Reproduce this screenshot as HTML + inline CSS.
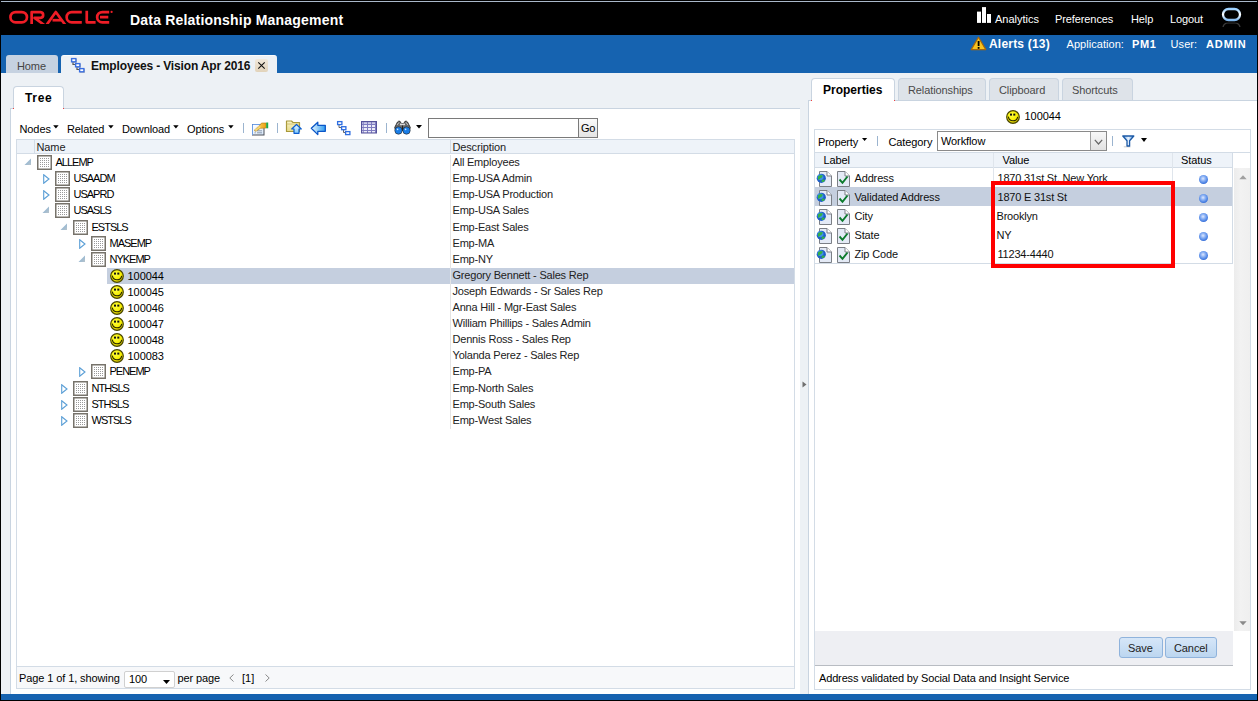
<!DOCTYPE html>
<html><head><meta charset="utf-8"><title>Data Relationship Management</title>
<style>
html,body{margin:0;padding:0;}
body{width:1258px;height:701px;position:relative;overflow:hidden;background:#000;font-family:"Liberation Sans", sans-serif;}
div,span,svg{position:absolute;box-sizing:border-box;}
.t{white-space:nowrap;}
</style></head><body>

<div style="left:1px;top:1px;width:1256px;height:1px;background:#a9b8c9"></div>
<div style="left:1px;top:35px;width:1256px;height:38px;background:#1663b0"></div>
<div style="left:1px;top:73px;width:1256px;height:621px;background:#edf1f5"></div>
<div style="left:1px;top:694px;width:1256px;height:6px;background:#1663b0"></div>
<svg style="left:0;top:0" width="120" height="35" viewBox="0 0 120 35">
<defs><clipPath id="lc"><rect x="0" y="9" width="120" height="14.9"/></clipPath></defs>
<g fill="none" stroke="#ef1d26" stroke-width="2.7" clip-path="url(#lc)" stroke-linejoin="round">
<rect x="10.45" y="12.05" width="16.5" height="10.3" rx="5.15" ry="5.15"/>
<path d="M31.65 25 V12.05 H40.6 A2.95 2.95 0 0 1 40.6 17.9 H34.5 L44.3 25"/>
<path d="M46.5 25 L55.8 12 L65.3 25"/>
<path d="M52.5 20.2 H61.5"/>
<path d="M81.8 12.05 H71.8 A5.15 5.15 0 0 0 71.8 22.35 H81.8"/>
<path d="M86.75 10.7 V22.35 H95.6"/>
<path d="M109.2 12.05 H102.3 A5.15 5.15 0 0 0 102.3 22.35 H109.2 M100 17.2 H108.3"/>
</g>
<circle cx="111.6" cy="11.9" r="1.1" fill="#ef1d26"/>
</svg>
<span class="t" style="left:130px;top:12.95px;font-size:14px;line-height:14px;font-weight:bold;color:#fff;letter-spacing:0.2px;">Data Relationship Management</span>
<svg style="left:976px;top:6px" width="16" height="17" viewBox="0 0 16 17">
<rect x="1" y="5.6" width="4" height="11.3" fill="#fff"/><rect x="6" y="1.1" width="4" height="15.8" fill="#fff"/><rect x="11" y="8" width="4" height="8.9" fill="#fff"/>
</svg>
<span class="t" style="left:995px;top:14.19px;font-size:11px;line-height:11px;font-weight:normal;color:#fff;letter-spacing:0px;">Analytics</span>
<span class="t" style="left:1055px;top:14.19px;font-size:11px;line-height:11px;font-weight:normal;color:#fff;letter-spacing:-0.1px;">Preferences</span>
<span class="t" style="left:1131px;top:14.19px;font-size:11px;line-height:11px;font-weight:normal;color:#fff;letter-spacing:-0.1px;">Help</span>
<span class="t" style="left:1170px;top:14.19px;font-size:11px;line-height:11px;font-weight:normal;color:#fff;letter-spacing:-0.1px;">Logout</span>
<svg style="left:1220px;top:6px" width="24" height="22" viewBox="0 0 24 22">
<rect x="3" y="3" width="17" height="11" rx="5.5" ry="5.5" fill="none" stroke="url(#og)" stroke-width="2.3"/>
<defs><clipPath id="oc"><rect x="0" y="16.5" width="24" height="4.5"/></clipPath><linearGradient id="og" x1="0" y1="0" x2="0" y2="1"><stop offset="0" stop-color="#9ad0ff"/><stop offset="0.5" stop-color="#ffffff"/><stop offset="1" stop-color="#7fb8ef"/></linearGradient></defs>
<rect x="3" y="16.8" width="17" height="10" rx="5" ry="5" fill="none" stroke="#3a3a3a" stroke-width="1.3" clip-path="url(#oc)"/>
</svg>
<svg style="left:970px;top:36px" width="17" height="15" viewBox="0 0 17 15">
<path d="M8.5 1.2 L15.8 13.6 H1.2 Z" fill="#f9c31f" stroke="#a8670a" stroke-width="1.2" stroke-linejoin="round"/>
<rect x="7.7" y="5" width="1.8" height="5" fill="#000"/><rect x="7.7" y="11" width="1.8" height="1.8" fill="#000"/>
</svg>
<span class="t" style="left:989px;top:38.44px;font-size:12px;line-height:12px;font-weight:bold;color:#fff;letter-spacing:0.2px;">Alerts (13)</span>
<span class="t" style="left:1066.5px;top:39.19px;font-size:11px;line-height:11px;font-weight:normal;color:#fff;letter-spacing:0.05px;">Application:</span>
<span class="t" style="left:1132px;top:39.19px;font-size:11px;line-height:11px;font-weight:bold;color:#fff;letter-spacing:0.6px;">PM1</span>
<span class="t" style="left:1170.5px;top:39.19px;font-size:11px;line-height:11px;font-weight:normal;color:#fff;letter-spacing:0.1px;">User:</span>
<span class="t" style="left:1206px;top:39.19px;font-size:11px;line-height:11px;font-weight:bold;color:#fff;letter-spacing:0.9px;">ADMIN</span>
<div style="left:6px;top:55px;width:52px;height:18px;background:#c6d2e1;border-radius:3px 3px 0 0"></div>
<span class="t" style="left:17px;top:60.69px;font-size:11px;line-height:11px;font-weight:normal;color:#444;letter-spacing:-0.1px;">Home</span>
<div style="left:61px;top:55px;width:216px;height:18px;background:#edf1f5;border-top:1px solid #fbfcfd;border-radius:3px 3px 0 0"></div>
<svg style="left:70px;top:57px" width="16" height="16" viewBox="0 0 16 16">
<path d="M3 5 V7.5 H5 M7 10 V12.5 H9" stroke="#555" stroke-width="1.2" fill="none"/>
<path d="M6.5 2 V5.5 M10.5 7 V10.5 M14.5 12 V15.5 M2 5.5 H6.5 M6 10.5 H10.5 M10 15.5 H14.5" stroke="#999" stroke-width="0.8" opacity="0.7"/>
<rect x="1.6" y="1.6" width="4.3" height="3.2" fill="#fff" stroke="#3a6fe0" stroke-width="1.4"/>
<rect x="5.6" y="6.6" width="4.3" height="3.2" fill="#fff" stroke="#3a6fe0" stroke-width="1.4"/>
<rect x="9.6" y="11.6" width="4.3" height="3.2" fill="#fff" stroke="#3a6fe0" stroke-width="1.4"/>
</svg>
<span class="t" style="left:91px;top:59.84px;font-size:12px;line-height:12px;font-weight:bold;color:#111;letter-spacing:-0.15px;">Employees - Vision Apr 2016</span>
<div style="left:255px;top:59px;width:13px;height:13px;background:linear-gradient(#f1e9dc,#e2d3ba);border-radius:2px"></div>
<svg style="left:256px;top:60px" width="11" height="11" viewBox="0 0 11 11"><path d="M2.3 2.3 L8.7 8.7 M8.7 2.3 L2.3 8.7" stroke="#111" stroke-width="1.05"/></svg>
<div style="left:13px;top:86px;width:51px;height:23px;background:#fff;border:1px solid #c9d4e0;border-bottom:none;border-radius:4px 4px 0 0"></div>
<span class="t" style="left:25px;top:91.84px;font-size:12px;line-height:12px;font-weight:bold;color:#000;letter-spacing:0.7px;">Tree</span>
<div style="left:10px;top:108px;width:790px;height:586px;background:#fff;border-left:1px solid #c9d4e0;border-top:1px solid #c9d4e0"></div>
<div style="left:14px;top:108px;width:49px;height:1px;background:#fff"></div>
<div style="left:13px;top:108px;width:1px;height:1px;background:#f04040"></div>
<div style="left:63px;top:108px;width:1px;height:1px;background:#f04040"></div>
<span class="t" style="left:19.5px;top:123.69px;font-size:11px;line-height:11px;font-weight:normal;color:#000;letter-spacing:-0.1px;">Nodes</span>
<svg style="left:53px;top:124.5px" width="6" height="4" viewBox="0 0 6 4"><path d="M0.2 0.2 H5.6 L2.9 3.4 Z" fill="#000"/></svg>
<span class="t" style="left:67px;top:123.69px;font-size:11px;line-height:11px;font-weight:normal;color:#000;letter-spacing:-0.1px;">Related</span>
<svg style="left:108px;top:124.5px" width="6" height="4" viewBox="0 0 6 4"><path d="M0.2 0.2 H5.6 L2.9 3.4 Z" fill="#000"/></svg>
<span class="t" style="left:122px;top:123.69px;font-size:11px;line-height:11px;font-weight:normal;color:#000;letter-spacing:-0.1px;">Download</span>
<svg style="left:173px;top:124.5px" width="6" height="4" viewBox="0 0 6 4"><path d="M0.2 0.2 H5.6 L2.9 3.4 Z" fill="#000"/></svg>
<span class="t" style="left:187px;top:123.69px;font-size:11px;line-height:11px;font-weight:normal;color:#000;letter-spacing:-0.1px;">Options</span>
<svg style="left:228px;top:124.5px" width="6" height="4" viewBox="0 0 6 4"><path d="M0.2 0.2 H5.6 L2.9 3.4 Z" fill="#000"/></svg>
<div style="left:243px;top:123px;width:1px;height:10px;background:#9bb4cf"></div>
<div style="left:277px;top:123px;width:1px;height:10px;background:#9bb4cf"></div>
<div style="left:386px;top:123px;width:1px;height:10px;background:#9bb4cf"></div>
<svg style="left:251px;top:120px" width="19" height="16" viewBox="0 0 19 16">
<defs><linearGradient id="sh" x1="0" y1="0" x2="1" y2="1"><stop offset="0" stop-color="#ffffff"/><stop offset="1" stop-color="#d6e6f8"/></linearGradient>
<linearGradient id="pn" x1="0" y1="0" x2="1" y2="0"><stop offset="0" stop-color="#f6e27a"/><stop offset="1" stop-color="#f0a010"/></linearGradient></defs>
<rect x="1.5" y="4.5" width="11.5" height="10.5" fill="url(#sh)" stroke="#4a4f58" stroke-width="1"/>
<path d="M1.5 15 V4.5 H13" fill="none" stroke="#6d9ee6" stroke-width="1"/>
<path d="M3.5 10.8 H4.8 M6 10.8 H11 M3.5 12.8 H4.8 M6 12.8 H11" stroke="#8a9bb0" stroke-width="1"/>
<path d="M3.3 10.2 L9 5 L10.5 3 H15.2 V8 L9.5 8.3 L4.8 11.3 Z" fill="url(#pn)" stroke="#b07810" stroke-width="0.6"/>
<path d="M4 9.5 L9 5.5 M5 10.5 L10 6.5" stroke="#fff6c0" stroke-width="0.7" stroke-dasharray="1 1"/>
<rect x="15.2" y="2.5" width="2" height="5.8" fill="#1fa84a"/>
</svg>
<svg style="left:285px;top:119px" width="18" height="16" viewBox="0 0 18 16">
<defs><linearGradient id="fd" x1="0" y1="0" x2="0" y2="1"><stop offset="0" stop-color="#faf5c8"/><stop offset="1" stop-color="#e6da88"/></linearGradient>
<linearGradient id="ua" x1="0" y1="0" x2="0" y2="1"><stop offset="0" stop-color="#e8f6ff"/><stop offset="1" stop-color="#7cc8fa"/></linearGradient></defs>
<path d="M1.5 2 H6.5 L8 3.5 H14.5 V12.5 H1.5 Z" fill="url(#fd)" stroke="#a8983a" stroke-width="1.2" stroke-linejoin="round"/>
<path d="M1.5 5 H14.5" stroke="#c8b860" stroke-width="0.8"/>
<path d="M11.5 5.5 L16.3 10 H14 V14.3 H9 V10 H6.7 Z" fill="url(#ua)" stroke="#0c5ed0" stroke-width="1.2" stroke-linejoin="round"/>
</svg>
<svg style="left:310px;top:121px" width="18" height="15" viewBox="0 0 18 15">
<defs><linearGradient id="ba" x1="0" y1="0" x2="1" y2="0"><stop offset="0" stop-color="#eaf7ff"/><stop offset="1" stop-color="#2f9cf0"/></linearGradient></defs>
<path d="M1.3 7.3 L7.8 1.2 V4.3 H15.3 V10.3 H7.8 V13.6 Z" fill="url(#ba)" stroke="#0a56c8" stroke-width="1.3" stroke-linejoin="round"/>
</svg>
<svg style="left:336px;top:120px" width="16" height="16" viewBox="0 0 16 16">
<path d="M3 4.5 V7.5 H5.5 M7.5 9.5 V12.5 H9.5" stroke="#666" stroke-width="1" fill="none"/>
<rect x="1.6" y="1.6" width="4.3" height="3" fill="#fff" stroke="#2f6ee0" stroke-width="1.3"/>
<rect x="5.6" y="6.7" width="4.3" height="3" fill="#fff" stroke="#2f6ee0" stroke-width="1.3"/>
<rect x="9.6" y="11.6" width="4.3" height="3" fill="#fff" stroke="#2f6ee0" stroke-width="1.3"/>
</svg>
<svg style="left:360px;top:120px" width="18" height="15" viewBox="0 0 18 15">
<rect x="1.5" y="1.5" width="15" height="11.5" fill="#7f7cc0" stroke="#55529a" stroke-width="1"/>
<g fill="#ececf8"><rect x="4" y="2.5" width="3" height="1.2"/><rect x="8" y="2.5" width="3" height="1.2"/><rect x="12" y="2.5" width="3" height="1.2"/>
<rect x="4" y="5" width="3" height="2"/><rect x="8" y="5" width="3" height="2"/><rect x="12" y="5" width="3" height="2"/>
<rect x="4" y="8" width="3" height="2"/><rect x="8" y="8" width="3" height="2"/><rect x="12" y="8" width="3" height="2"/>
<rect x="4" y="11" width="3" height="1.3"/><rect x="8" y="11" width="3" height="1.3"/><rect x="12" y="11" width="3" height="1.3"/>
<rect x="2.3" y="2.5" width="1" height="1.2"/><rect x="2.3" y="5" width="1" height="2"/><rect x="2.3" y="8" width="1" height="2"/><rect x="2.3" y="11" width="1" height="1.3"/></g>
</svg>
<svg style="left:394px;top:120px" width="18" height="15" viewBox="0 0 18 15">
<path d="M3.5 2 Q4.5 0.8 6 1.3 L7.3 3.5 H9.7 L11 1.3 Q12.5 0.8 13.5 2 L16.3 7.5 L15.5 10 H1.5 L0.7 7.5 Z" fill="#6a6a6a" stroke="#2a2a2a" stroke-width="0.9"/>
<path d="M3 5 L5 2.5 M12 2.5 L14 5" stroke="#cfcfcf" stroke-width="0.9"/>
<rect x="6" y="3.6" width="5" height="1.6" fill="#dadada"/>
<path d="M8.5 5.5 V11" stroke="#222" stroke-width="1"/>
<circle cx="4.5" cy="10.5" r="3.7" fill="#1a7ee8" stroke="#222" stroke-width="0.6"/>
<circle cx="12.5" cy="10.5" r="3.7" fill="#1a7ee8" stroke="#222" stroke-width="0.6"/>
<circle cx="3.6" cy="9.4" r="0.8" fill="#cfe8ff"/><circle cx="11.6" cy="9.4" r="0.8" fill="#cfe8ff"/>
</svg>
<svg style="left:416px;top:125px" width="6" height="4" viewBox="0 0 6 4"><path d="M0 0 H6 L3 3.5 Z" fill="#000"/></svg>
<div style="left:428px;top:118px;width:151px;height:20px;background:#fff;border:1px solid #7a7a7a"></div>
<div style="left:578px;top:118px;width:20px;height:20px;background:linear-gradient(#fafafa,#e4e4e4);border:1px solid #7a7a7a"></div>
<span class="t" style="left:581px;top:122.69px;font-size:11px;line-height:11px;font-weight:normal;color:#000;letter-spacing:-0.2px;">Go</span>
<div style="left:16px;top:139px;width:779px;height:528px;background:#fff;border:1px solid #d3dce6"></div>
<div style="left:17px;top:140px;width:777px;height:14px;background:#eef3f9;border-bottom:1px solid #d3dce6"></div>
<div style="left:34px;top:140px;width:1px;height:14px;background:#d3dce6"></div>
<div style="left:450px;top:140px;width:1px;height:14px;background:#d3dce6"></div>
<span class="t" style="left:36.5px;top:141.69px;font-size:11px;line-height:11px;font-weight:normal;color:#222;letter-spacing:-0.1px;">Name</span>
<span class="t" style="left:452.5px;top:141.69px;font-size:11px;line-height:11px;font-weight:normal;color:#222;letter-spacing:-0.15px;">Description</span>
<div style="left:107px;top:268px;width:687px;height:16px;background:#c5cfdf"></div>
<div style="left:450px;top:155px;width:1px;height:274px;background:#e4e4e4"></div>
<svg style="left:24px;top:158px" width="8" height="8" viewBox="0 0 8 8"><defs><linearGradient id="tg155" x1="0" y1="0" x2="1" y2="1"><stop offset="0" stop-color="#7fb0d8"/><stop offset="1" stop-color="#b8c4cc"/></linearGradient></defs><path d="M7 0.5 V7 H0.5 Z" fill="url(#tg155)"/></svg>
<svg style="left:37px;top:155px" width="15" height="15" viewBox="0 0 15 15">
<rect x="0.75" y="0.75" width="13.5" height="13.5" fill="#fff" stroke="#77736b" stroke-width="1.5"/>
<path d="M3 3.5 H12 M3 5.5 H12 M3 7.5 H12 M3 9.5 H12 M3 11.5 H12" stroke="#9a9a9a" stroke-width="1" stroke-dasharray="1 1"/>
</svg>
<span class="t" style="left:55.5px;top:157.19px;font-size:11px;line-height:11px;font-weight:normal;color:#000;letter-spacing:-1.0px;">ALLEMP</span>
<span class="t" style="left:452.5px;top:157.19px;font-size:11px;line-height:11px;font-weight:normal;color:#222;letter-spacing:-0.2px;">All Employees</span>
<svg style="left:43px;top:174px" width="7" height="10" viewBox="0 0 7 10"><path d="M0.7 0.7 L6 5 L0.7 9.3 Z" fill="#fff" stroke="#5b9fd6" stroke-width="1.1"/></svg>
<svg style="left:55px;top:171px" width="15" height="15" viewBox="0 0 15 15">
<rect x="0.75" y="0.75" width="13.5" height="13.5" fill="#fff" stroke="#77736b" stroke-width="1.5"/>
<path d="M3 3.5 H12 M3 5.5 H12 M3 7.5 H12 M3 9.5 H12 M3 11.5 H12" stroke="#9a9a9a" stroke-width="1" stroke-dasharray="1 1"/>
</svg>
<span class="t" style="left:73.5px;top:173.19px;font-size:11px;line-height:11px;font-weight:normal;color:#000;letter-spacing:-1.0px;">USAADM</span>
<span class="t" style="left:452.5px;top:173.19px;font-size:11px;line-height:11px;font-weight:normal;color:#222;letter-spacing:-0.2px;">Emp-USA Admin</span>
<svg style="left:43px;top:190px" width="7" height="10" viewBox="0 0 7 10"><path d="M0.7 0.7 L6 5 L0.7 9.3 Z" fill="#fff" stroke="#5b9fd6" stroke-width="1.1"/></svg>
<svg style="left:55px;top:187px" width="15" height="15" viewBox="0 0 15 15">
<rect x="0.75" y="0.75" width="13.5" height="13.5" fill="#fff" stroke="#77736b" stroke-width="1.5"/>
<path d="M3 3.5 H12 M3 5.5 H12 M3 7.5 H12 M3 9.5 H12 M3 11.5 H12" stroke="#9a9a9a" stroke-width="1" stroke-dasharray="1 1"/>
</svg>
<span class="t" style="left:73.5px;top:189.19px;font-size:11px;line-height:11px;font-weight:normal;color:#000;letter-spacing:-1.0px;">USAPRD</span>
<span class="t" style="left:452.5px;top:189.19px;font-size:11px;line-height:11px;font-weight:normal;color:#222;letter-spacing:-0.2px;">Emp-USA Production</span>
<svg style="left:42px;top:206px" width="8" height="8" viewBox="0 0 8 8"><defs><linearGradient id="tg203" x1="0" y1="0" x2="1" y2="1"><stop offset="0" stop-color="#7fb0d8"/><stop offset="1" stop-color="#b8c4cc"/></linearGradient></defs><path d="M7 0.5 V7 H0.5 Z" fill="url(#tg203)"/></svg>
<svg style="left:55px;top:203px" width="15" height="15" viewBox="0 0 15 15">
<rect x="0.75" y="0.75" width="13.5" height="13.5" fill="#fff" stroke="#77736b" stroke-width="1.5"/>
<path d="M3 3.5 H12 M3 5.5 H12 M3 7.5 H12 M3 9.5 H12 M3 11.5 H12" stroke="#9a9a9a" stroke-width="1" stroke-dasharray="1 1"/>
</svg>
<span class="t" style="left:73.5px;top:205.19px;font-size:11px;line-height:11px;font-weight:normal;color:#000;letter-spacing:-1.0px;">USASLS</span>
<span class="t" style="left:452.5px;top:205.19px;font-size:11px;line-height:11px;font-weight:normal;color:#222;letter-spacing:-0.2px;">Emp-USA Sales</span>
<svg style="left:60px;top:223px" width="8" height="8" viewBox="0 0 8 8"><defs><linearGradient id="tg220" x1="0" y1="0" x2="1" y2="1"><stop offset="0" stop-color="#7fb0d8"/><stop offset="1" stop-color="#b8c4cc"/></linearGradient></defs><path d="M7 0.5 V7 H0.5 Z" fill="url(#tg220)"/></svg>
<svg style="left:73px;top:220px" width="15" height="15" viewBox="0 0 15 15">
<rect x="0.75" y="0.75" width="13.5" height="13.5" fill="#fff" stroke="#77736b" stroke-width="1.5"/>
<path d="M3 3.5 H12 M3 5.5 H12 M3 7.5 H12 M3 9.5 H12 M3 11.5 H12" stroke="#9a9a9a" stroke-width="1" stroke-dasharray="1 1"/>
</svg>
<span class="t" style="left:91.5px;top:222.19px;font-size:11px;line-height:11px;font-weight:normal;color:#000;letter-spacing:-1.0px;">ESTSLS</span>
<span class="t" style="left:452.5px;top:222.19px;font-size:11px;line-height:11px;font-weight:normal;color:#222;letter-spacing:-0.2px;">Emp-East Sales</span>
<svg style="left:79px;top:239px" width="7" height="10" viewBox="0 0 7 10"><path d="M0.7 0.7 L6 5 L0.7 9.3 Z" fill="#fff" stroke="#5b9fd6" stroke-width="1.1"/></svg>
<svg style="left:91px;top:236px" width="15" height="15" viewBox="0 0 15 15">
<rect x="0.75" y="0.75" width="13.5" height="13.5" fill="#fff" stroke="#77736b" stroke-width="1.5"/>
<path d="M3 3.5 H12 M3 5.5 H12 M3 7.5 H12 M3 9.5 H12 M3 11.5 H12" stroke="#9a9a9a" stroke-width="1" stroke-dasharray="1 1"/>
</svg>
<span class="t" style="left:109.5px;top:238.19px;font-size:11px;line-height:11px;font-weight:normal;color:#000;letter-spacing:-1.0px;">MASEMP</span>
<span class="t" style="left:452.5px;top:238.19px;font-size:11px;line-height:11px;font-weight:normal;color:#222;letter-spacing:-0.2px;">Emp-MA</span>
<svg style="left:78px;top:255px" width="8" height="8" viewBox="0 0 8 8"><defs><linearGradient id="tg252" x1="0" y1="0" x2="1" y2="1"><stop offset="0" stop-color="#7fb0d8"/><stop offset="1" stop-color="#b8c4cc"/></linearGradient></defs><path d="M7 0.5 V7 H0.5 Z" fill="url(#tg252)"/></svg>
<svg style="left:91px;top:252px" width="15" height="15" viewBox="0 0 15 15">
<rect x="0.75" y="0.75" width="13.5" height="13.5" fill="#fff" stroke="#77736b" stroke-width="1.5"/>
<path d="M3 3.5 H12 M3 5.5 H12 M3 7.5 H12 M3 9.5 H12 M3 11.5 H12" stroke="#9a9a9a" stroke-width="1" stroke-dasharray="1 1"/>
</svg>
<span class="t" style="left:109.5px;top:254.19px;font-size:11px;line-height:11px;font-weight:normal;color:#000;letter-spacing:-1.0px;">NYKEMP</span>
<span class="t" style="left:452.5px;top:254.19px;font-size:11px;line-height:11px;font-weight:normal;color:#222;letter-spacing:-0.2px;">Emp-NY</span>
<svg style="left:110px;top:269px" width="14" height="14" viewBox="0 0 14 14">
<defs><radialGradient id="sm110_269" cx="0.4" cy="0.35" r="0.7"><stop offset="0" stop-color="#ffff40"/><stop offset="0.6" stop-color="#f6ee00"/><stop offset="1" stop-color="#c9b800"/></radialGradient></defs>
<circle cx="7" cy="7" r="6.3" fill="url(#sm110_269)" stroke="#4a4700" stroke-width="1.2"/>
<rect x="4" y="3.6" width="2" height="2" fill="#111"/><rect x="7.3" y="3.6" width="2" height="2" fill="#111"/>
<path d="M2.3 6.6 Q3 10.8 7 10.8 Q11 10.8 11.7 6.8" fill="none" stroke="#2a2800" stroke-width="1.1"/>
</svg>
<span class="t" style="left:127.5px;top:270.69px;font-size:11px;line-height:11px;font-weight:normal;color:#000;letter-spacing:-0.05px;">100044</span>
<span class="t" style="left:452.5px;top:270.19px;font-size:11px;line-height:11px;font-weight:normal;color:#222;letter-spacing:-0.2px;">Gregory Bennett - Sales Rep</span>
<svg style="left:110px;top:285px" width="14" height="14" viewBox="0 0 14 14">
<defs><radialGradient id="sm110_285" cx="0.4" cy="0.35" r="0.7"><stop offset="0" stop-color="#ffff40"/><stop offset="0.6" stop-color="#f6ee00"/><stop offset="1" stop-color="#c9b800"/></radialGradient></defs>
<circle cx="7" cy="7" r="6.3" fill="url(#sm110_285)" stroke="#4a4700" stroke-width="1.2"/>
<rect x="4" y="3.6" width="2" height="2" fill="#111"/><rect x="7.3" y="3.6" width="2" height="2" fill="#111"/>
<path d="M2.3 6.6 Q3 10.8 7 10.8 Q11 10.8 11.7 6.8" fill="none" stroke="#2a2800" stroke-width="1.1"/>
</svg>
<span class="t" style="left:127.5px;top:286.69px;font-size:11px;line-height:11px;font-weight:normal;color:#000;letter-spacing:-0.05px;">100045</span>
<span class="t" style="left:452.5px;top:286.19px;font-size:11px;line-height:11px;font-weight:normal;color:#222;letter-spacing:-0.2px;">Joseph Edwards - Sr Sales Rep</span>
<svg style="left:110px;top:301px" width="14" height="14" viewBox="0 0 14 14">
<defs><radialGradient id="sm110_301" cx="0.4" cy="0.35" r="0.7"><stop offset="0" stop-color="#ffff40"/><stop offset="0.6" stop-color="#f6ee00"/><stop offset="1" stop-color="#c9b800"/></radialGradient></defs>
<circle cx="7" cy="7" r="6.3" fill="url(#sm110_301)" stroke="#4a4700" stroke-width="1.2"/>
<rect x="4" y="3.6" width="2" height="2" fill="#111"/><rect x="7.3" y="3.6" width="2" height="2" fill="#111"/>
<path d="M2.3 6.6 Q3 10.8 7 10.8 Q11 10.8 11.7 6.8" fill="none" stroke="#2a2800" stroke-width="1.1"/>
</svg>
<span class="t" style="left:127.5px;top:302.69px;font-size:11px;line-height:11px;font-weight:normal;color:#000;letter-spacing:-0.05px;">100046</span>
<span class="t" style="left:452.5px;top:302.19px;font-size:11px;line-height:11px;font-weight:normal;color:#222;letter-spacing:-0.2px;">Anna Hill - Mgr-East Sales</span>
<svg style="left:110px;top:317px" width="14" height="14" viewBox="0 0 14 14">
<defs><radialGradient id="sm110_317" cx="0.4" cy="0.35" r="0.7"><stop offset="0" stop-color="#ffff40"/><stop offset="0.6" stop-color="#f6ee00"/><stop offset="1" stop-color="#c9b800"/></radialGradient></defs>
<circle cx="7" cy="7" r="6.3" fill="url(#sm110_317)" stroke="#4a4700" stroke-width="1.2"/>
<rect x="4" y="3.6" width="2" height="2" fill="#111"/><rect x="7.3" y="3.6" width="2" height="2" fill="#111"/>
<path d="M2.3 6.6 Q3 10.8 7 10.8 Q11 10.8 11.7 6.8" fill="none" stroke="#2a2800" stroke-width="1.1"/>
</svg>
<span class="t" style="left:127.5px;top:318.69px;font-size:11px;line-height:11px;font-weight:normal;color:#000;letter-spacing:-0.05px;">100047</span>
<span class="t" style="left:452.5px;top:318.19px;font-size:11px;line-height:11px;font-weight:normal;color:#222;letter-spacing:-0.2px;">William Phillips - Sales Admin</span>
<svg style="left:110px;top:333px" width="14" height="14" viewBox="0 0 14 14">
<defs><radialGradient id="sm110_333" cx="0.4" cy="0.35" r="0.7"><stop offset="0" stop-color="#ffff40"/><stop offset="0.6" stop-color="#f6ee00"/><stop offset="1" stop-color="#c9b800"/></radialGradient></defs>
<circle cx="7" cy="7" r="6.3" fill="url(#sm110_333)" stroke="#4a4700" stroke-width="1.2"/>
<rect x="4" y="3.6" width="2" height="2" fill="#111"/><rect x="7.3" y="3.6" width="2" height="2" fill="#111"/>
<path d="M2.3 6.6 Q3 10.8 7 10.8 Q11 10.8 11.7 6.8" fill="none" stroke="#2a2800" stroke-width="1.1"/>
</svg>
<span class="t" style="left:127.5px;top:334.69px;font-size:11px;line-height:11px;font-weight:normal;color:#000;letter-spacing:-0.05px;">100048</span>
<span class="t" style="left:452.5px;top:334.19px;font-size:11px;line-height:11px;font-weight:normal;color:#222;letter-spacing:-0.2px;">Dennis Ross - Sales Rep</span>
<svg style="left:110px;top:349px" width="14" height="14" viewBox="0 0 14 14">
<defs><radialGradient id="sm110_349" cx="0.4" cy="0.35" r="0.7"><stop offset="0" stop-color="#ffff40"/><stop offset="0.6" stop-color="#f6ee00"/><stop offset="1" stop-color="#c9b800"/></radialGradient></defs>
<circle cx="7" cy="7" r="6.3" fill="url(#sm110_349)" stroke="#4a4700" stroke-width="1.2"/>
<rect x="4" y="3.6" width="2" height="2" fill="#111"/><rect x="7.3" y="3.6" width="2" height="2" fill="#111"/>
<path d="M2.3 6.6 Q3 10.8 7 10.8 Q11 10.8 11.7 6.8" fill="none" stroke="#2a2800" stroke-width="1.1"/>
</svg>
<span class="t" style="left:127.5px;top:350.69px;font-size:11px;line-height:11px;font-weight:normal;color:#000;letter-spacing:-0.05px;">100083</span>
<span class="t" style="left:452.5px;top:350.19px;font-size:11px;line-height:11px;font-weight:normal;color:#222;letter-spacing:-0.2px;">Yolanda Perez - Sales Rep</span>
<svg style="left:79px;top:367px" width="7" height="10" viewBox="0 0 7 10"><path d="M0.7 0.7 L6 5 L0.7 9.3 Z" fill="#fff" stroke="#5b9fd6" stroke-width="1.1"/></svg>
<svg style="left:91px;top:364px" width="15" height="15" viewBox="0 0 15 15">
<rect x="0.75" y="0.75" width="13.5" height="13.5" fill="#fff" stroke="#77736b" stroke-width="1.5"/>
<path d="M3 3.5 H12 M3 5.5 H12 M3 7.5 H12 M3 9.5 H12 M3 11.5 H12" stroke="#9a9a9a" stroke-width="1" stroke-dasharray="1 1"/>
</svg>
<span class="t" style="left:109.5px;top:366.19px;font-size:11px;line-height:11px;font-weight:normal;color:#000;letter-spacing:-1.0px;">PENEMP</span>
<span class="t" style="left:452.5px;top:366.19px;font-size:11px;line-height:11px;font-weight:normal;color:#222;letter-spacing:-0.2px;">Emp-PA</span>
<svg style="left:61px;top:384px" width="7" height="10" viewBox="0 0 7 10"><path d="M0.7 0.7 L6 5 L0.7 9.3 Z" fill="#fff" stroke="#5b9fd6" stroke-width="1.1"/></svg>
<svg style="left:73px;top:381px" width="15" height="15" viewBox="0 0 15 15">
<rect x="0.75" y="0.75" width="13.5" height="13.5" fill="#fff" stroke="#77736b" stroke-width="1.5"/>
<path d="M3 3.5 H12 M3 5.5 H12 M3 7.5 H12 M3 9.5 H12 M3 11.5 H12" stroke="#9a9a9a" stroke-width="1" stroke-dasharray="1 1"/>
</svg>
<span class="t" style="left:91.5px;top:383.19px;font-size:11px;line-height:11px;font-weight:normal;color:#000;letter-spacing:-1.0px;">NTHSLS</span>
<span class="t" style="left:452.5px;top:383.19px;font-size:11px;line-height:11px;font-weight:normal;color:#222;letter-spacing:-0.2px;">Emp-North Sales</span>
<svg style="left:61px;top:400px" width="7" height="10" viewBox="0 0 7 10"><path d="M0.7 0.7 L6 5 L0.7 9.3 Z" fill="#fff" stroke="#5b9fd6" stroke-width="1.1"/></svg>
<svg style="left:73px;top:397px" width="15" height="15" viewBox="0 0 15 15">
<rect x="0.75" y="0.75" width="13.5" height="13.5" fill="#fff" stroke="#77736b" stroke-width="1.5"/>
<path d="M3 3.5 H12 M3 5.5 H12 M3 7.5 H12 M3 9.5 H12 M3 11.5 H12" stroke="#9a9a9a" stroke-width="1" stroke-dasharray="1 1"/>
</svg>
<span class="t" style="left:91.5px;top:399.19px;font-size:11px;line-height:11px;font-weight:normal;color:#000;letter-spacing:-1.0px;">STHSLS</span>
<span class="t" style="left:452.5px;top:399.19px;font-size:11px;line-height:11px;font-weight:normal;color:#222;letter-spacing:-0.2px;">Emp-South Sales</span>
<svg style="left:61px;top:416px" width="7" height="10" viewBox="0 0 7 10"><path d="M0.7 0.7 L6 5 L0.7 9.3 Z" fill="#fff" stroke="#5b9fd6" stroke-width="1.1"/></svg>
<svg style="left:73px;top:413px" width="15" height="15" viewBox="0 0 15 15">
<rect x="0.75" y="0.75" width="13.5" height="13.5" fill="#fff" stroke="#77736b" stroke-width="1.5"/>
<path d="M3 3.5 H12 M3 5.5 H12 M3 7.5 H12 M3 9.5 H12 M3 11.5 H12" stroke="#9a9a9a" stroke-width="1" stroke-dasharray="1 1"/>
</svg>
<span class="t" style="left:91.5px;top:415.19px;font-size:11px;line-height:11px;font-weight:normal;color:#000;letter-spacing:-1.0px;">WSTSLS</span>
<span class="t" style="left:452.5px;top:415.19px;font-size:11px;line-height:11px;font-weight:normal;color:#222;letter-spacing:-0.2px;">Emp-West Sales</span>
<div style="left:16px;top:667px;width:779px;height:22px;background:#f7f8fa;border:1px solid #d3dce6;border-top:none"></div>
<span class="t" style="left:19px;top:672.69px;font-size:11px;line-height:11px;font-weight:normal;color:#000;letter-spacing:-0.1px;">Page 1 of 1, showing</span>
<div style="left:124px;top:671px;width:51px;height:17px;background:#fff;border:1px solid #d0d0d0;border-radius:2px"></div>
<span class="t" style="left:129px;top:673.69px;font-size:11px;line-height:11px;font-weight:normal;color:#000;letter-spacing:-0.1px;">100</span>
<svg style="left:163px;top:680px" width="7" height="4" viewBox="0 0 7 4"><path d="M0 0 H7 L3.5 4 Z" fill="#000"/></svg>
<span class="t" style="left:177.5px;top:672.69px;font-size:11px;line-height:11px;font-weight:normal;color:#000;letter-spacing:-0.1px;">per page</span>
<svg style="left:229px;top:674px" width="5" height="8" viewBox="0 0 5 8"><path d="M4.5 0.5 L0.8 4 L4.5 7.5" fill="none" stroke="#8a8a8a" stroke-width="1"/></svg>
<span class="t" style="left:242px;top:672.69px;font-size:11px;line-height:11px;font-weight:normal;color:#000;letter-spacing:0px;">[1]</span>
<svg style="left:265px;top:674px" width="5" height="8" viewBox="0 0 5 8"><path d="M0.5 0.5 L4.2 4 L0.5 7.5" fill="none" stroke="#8a8a8a" stroke-width="1"/></svg>
<svg style="left:802px;top:381px" width="5" height="7" viewBox="0 0 5 7"><path d="M0.5 0.5 L4.5 3.5 L0.5 6.5 Z" fill="#6f6f6f"/></svg>
<div style="left:808px;top:100px;width:449px;height:594px;background:#fff;border-left:1px solid #c9d4e0;border-top:1px solid #c9d4e0"></div>
<div style="left:811px;top:78px;width:84px;height:23px;background:#fff;border:1px solid #c9d4e0;border-bottom:none;border-radius:4px 4px 0 0"></div>
<div style="left:812px;top:100px;width:82px;height:1px;background:#fff"></div>
<div style="left:811px;top:100px;width:1px;height:1px;background:#f04040"></div>
<div style="left:894px;top:100px;width:1px;height:1px;background:#f04040"></div>
<span class="t" style="left:823px;top:83.84px;font-size:12px;line-height:12px;font-weight:bold;color:#000;letter-spacing:0px;">Properties</span>
<div style="left:898px;top:78px;width:88px;height:22px;background:#dee3e9;border:1px solid #c9d4e0;border-bottom:none;border-radius:4px 4px 0 0"></div>
<span class="t" style="left:908px;top:85.19px;font-size:11px;line-height:11px;font-weight:normal;color:#4a4a4a;letter-spacing:-0.1px;">Relationships</span>
<div style="left:989px;top:78px;width:70px;height:22px;background:#dee3e9;border:1px solid #c9d4e0;border-bottom:none;border-radius:4px 4px 0 0"></div>
<span class="t" style="left:999px;top:85.19px;font-size:11px;line-height:11px;font-weight:normal;color:#4a4a4a;letter-spacing:-0.1px;">Clipboard</span>
<div style="left:1062px;top:78px;width:71px;height:22px;background:#dee3e9;border:1px solid #c9d4e0;border-bottom:none;border-radius:4px 4px 0 0"></div>
<span class="t" style="left:1072px;top:85.19px;font-size:11px;line-height:11px;font-weight:normal;color:#4a4a4a;letter-spacing:-0.1px;">Shortcuts</span>
<svg style="left:1006px;top:110px" width="14" height="14" viewBox="0 0 14 14">
<defs><radialGradient id="sm1006_110" cx="0.4" cy="0.35" r="0.7"><stop offset="0" stop-color="#ffff40"/><stop offset="0.6" stop-color="#f6ee00"/><stop offset="1" stop-color="#c9b800"/></radialGradient></defs>
<circle cx="7" cy="7" r="6.3" fill="url(#sm1006_110)" stroke="#4a4700" stroke-width="1.2"/>
<rect x="4" y="3.6" width="2" height="2" fill="#111"/><rect x="7.3" y="3.6" width="2" height="2" fill="#111"/>
<path d="M2.3 6.6 Q3 10.8 7 10.8 Q11 10.8 11.7 6.8" fill="none" stroke="#2a2800" stroke-width="1.1"/>
</svg>
<span class="t" style="left:1024.5px;top:110.69px;font-size:11px;line-height:11px;font-weight:normal;color:#000;letter-spacing:-0.05px;">100044</span>
<div style="left:814px;top:129px;width:437px;height:24px;background:#fff;border:1px solid #d3dce6;border-bottom:none"></div>
<span class="t" style="left:818px;top:136.69px;font-size:11px;line-height:11px;font-weight:normal;color:#000;letter-spacing:-0.2px;">Property</span>
<svg style="left:862px;top:138px" width="6" height="4" viewBox="0 0 6 4"><path d="M0 0 H5.2 L2.6 3 Z" fill="#000"/></svg>
<div style="left:877px;top:136px;width:1px;height:10px;background:#9bb4cf"></div>
<span class="t" style="left:888.5px;top:136.69px;font-size:11px;line-height:11px;font-weight:normal;color:#000;letter-spacing:-0.1px;">Category</span>
<div style="left:937px;top:131px;width:170px;height:20px;background:#fff;border:1px solid #8a8a8a"></div>
<span class="t" style="left:941px;top:135.69px;font-size:11px;line-height:11px;font-weight:normal;color:#000;letter-spacing:-0.1px;">Workflow</span>
<div style="left:1090px;top:132px;width:16px;height:18px;background:linear-gradient(#f8f8f8,#e2e2e2);border-left:1px solid #a0a0a0"></div>
<svg style="left:1094px;top:139px" width="9" height="6" viewBox="0 0 9 6"><path d="M0.8 0.8 L4.5 5 L8.2 0.8" fill="none" stroke="#666" stroke-width="1.2"/></svg>
<div style="left:1112px;top:136px;width:1px;height:10px;background:#9bb4cf"></div>
<svg style="left:1122px;top:135px" width="14" height="13" viewBox="0 0 14 13">
<defs><linearGradient id="fg" x1="0" x2="1"><stop offset="0" stop-color="#5b9ee0"/><stop offset="0.5" stop-color="#eaf3ff"/><stop offset="1" stop-color="#5b9ee0"/></linearGradient></defs>
<path d="M1.8 11.8 H8.5" stroke="#bbb" stroke-width="0.8"/>
<path d="M0.8 1 H11.8 L7.6 5.8 V11 H5 V5.8 Z" fill="url(#fg)" stroke="#1d5aa6" stroke-width="1.3" stroke-linejoin="round"/>
</svg>
<svg style="left:1141px;top:138px" width="6" height="4" viewBox="0 0 6 4"><path d="M0 0 H6 L3 4 Z" fill="#000"/></svg>
<div style="left:814px;top:152px;width:419px;height:16px;background:#eef3f9;border:1px solid #d3dce6"></div>
<span class="t" style="left:823.5px;top:154.69px;font-size:11px;line-height:11px;font-weight:normal;color:#000;letter-spacing:-0.1px;">Label</span>
<span class="t" style="left:1002.5px;top:154.69px;font-size:11px;line-height:11px;font-weight:normal;color:#000;letter-spacing:-0.1px;">Value</span>
<span class="t" style="left:1181px;top:154.69px;font-size:11px;line-height:11px;font-weight:normal;color:#000;letter-spacing:-0.1px;">Status</span>
<div style="left:1233px;top:152px;width:18px;height:16px;background:#fff;border-top:1px solid #d3dce6"></div>
<div style="left:814px;top:168px;width:419px;height:96px;background:#fff;border-left:1px solid #d3dce6;border-right:1px solid #d3dce6;border-bottom:1px solid #d3dce6"></div>
<div style="left:815px;top:187px;width:417px;height:19px;background:#c5cfdf"></div>
<div style="left:993px;top:153px;width:1px;height:110px;background:#dfe5ec"></div>
<div style="left:1172px;top:153px;width:1px;height:110px;background:#dfe5ec"></div>
<div style="left:1250px;top:129px;width:1px;height:561px;background:#d3dce6"></div>
<div style="left:1234px;top:168px;width:16px;height:463px;background:linear-gradient(90deg,#ececec,#f2f2f2 40%,#efefef)"></div>
<svg style="left:1238.5px;top:175px" width="8" height="5" viewBox="0 0 8 5"><path d="M0.3 4.3 L4 0.3 L7.7 4.3 Z" fill="#a0a0a0"/></svg>
<svg style="left:1238.5px;top:621px" width="8" height="5" viewBox="0 0 8 5"><path d="M0.3 0.3 L4 4.3 L7.7 0.3 Z" fill="#8a8a8a"/></svg>
<div style="left:814px;top:264px;width:1px;height:402px;background:#d3dce6"></div>
<svg style="left:815px;top:171px" width="36" height="17" viewBox="0 0 36 17">
<path d="M4.5 0.5 H12 L16.5 5 V15.5 H4.5 Z" fill="#e4eaf6" stroke="#7b7f86" stroke-width="1"/>
<path d="M12 0.5 V5 H16.5" fill="#fff" stroke="#7b7f86"/>
<circle cx="6.3" cy="7.3" r="4.6" fill="#1f5fc8"/>
<circle cx="5.5" cy="6.3" r="3" fill="#3d8fe8"/>
<path d="M3 5.5 Q5 3 8 4.5 Q7 7 5 7.5 Q4.5 9 3 8.5 Z M7 8.5 Q9 8 10 9.5 Q8.5 11.5 6.5 11 Z" fill="#34b244"/>
<path d="M22.5 0.5 H30 L34.5 5 V15.5 H22.5 Z" fill="#e4eaf6" stroke="#7b7f86" stroke-width="1"/>
<path d="M30 0.5 V5 H34.5" fill="#fff" stroke="#7b7f86"/>
<path d="M24.5 8.5 L27.5 11.8 L32.5 5.5" fill="none" stroke="#0c7a2c" stroke-width="1.9"/>
</svg>
<span class="t" style="left:854.5px;top:172.69px;font-size:11px;line-height:11px;font-weight:normal;color:#111;letter-spacing:-0.15px;">Address</span>
<span class="t" style="left:997.5px;top:172.69px;font-size:11px;line-height:11px;font-weight:normal;color:#111;letter-spacing:-0.2px;">1870 31st St, New York</span>
<div style="left:1198.5px;top:174.5px;width:9px;height:9px;border-radius:50%;background:radial-gradient(circle at 45% 40%,#dfe8ff 0,#8fb4f4 30%,#4f86e6 60%,#1f55c8 85%,#1a48b0 100%)"></div>
<svg style="left:815px;top:190px" width="36" height="17" viewBox="0 0 36 17">
<path d="M4.5 0.5 H12 L16.5 5 V15.5 H4.5 Z" fill="#e4eaf6" stroke="#7b7f86" stroke-width="1"/>
<path d="M12 0.5 V5 H16.5" fill="#fff" stroke="#7b7f86"/>
<circle cx="6.3" cy="7.3" r="4.6" fill="#1f5fc8"/>
<circle cx="5.5" cy="6.3" r="3" fill="#3d8fe8"/>
<path d="M3 5.5 Q5 3 8 4.5 Q7 7 5 7.5 Q4.5 9 3 8.5 Z M7 8.5 Q9 8 10 9.5 Q8.5 11.5 6.5 11 Z" fill="#34b244"/>
<path d="M22.5 0.5 H30 L34.5 5 V15.5 H22.5 Z" fill="#e4eaf6" stroke="#7b7f86" stroke-width="1"/>
<path d="M30 0.5 V5 H34.5" fill="#fff" stroke="#7b7f86"/>
<path d="M24.5 8.5 L27.5 11.8 L32.5 5.5" fill="none" stroke="#0c7a2c" stroke-width="1.9"/>
</svg>
<span class="t" style="left:854.5px;top:191.69px;font-size:11px;line-height:11px;font-weight:normal;color:#111;letter-spacing:-0.15px;">Validated Address</span>
<span class="t" style="left:997.5px;top:191.69px;font-size:11px;line-height:11px;font-weight:normal;color:#111;letter-spacing:-0.2px;">1870 E 31st St</span>
<div style="left:1198.5px;top:193.5px;width:9px;height:9px;border-radius:50%;background:radial-gradient(circle at 45% 40%,#dfe8ff 0,#8fb4f4 30%,#4f86e6 60%,#1f55c8 85%,#1a48b0 100%)"></div>
<svg style="left:815px;top:209px" width="36" height="17" viewBox="0 0 36 17">
<path d="M4.5 0.5 H12 L16.5 5 V15.5 H4.5 Z" fill="#e4eaf6" stroke="#7b7f86" stroke-width="1"/>
<path d="M12 0.5 V5 H16.5" fill="#fff" stroke="#7b7f86"/>
<circle cx="6.3" cy="7.3" r="4.6" fill="#1f5fc8"/>
<circle cx="5.5" cy="6.3" r="3" fill="#3d8fe8"/>
<path d="M3 5.5 Q5 3 8 4.5 Q7 7 5 7.5 Q4.5 9 3 8.5 Z M7 8.5 Q9 8 10 9.5 Q8.5 11.5 6.5 11 Z" fill="#34b244"/>
<path d="M22.5 0.5 H30 L34.5 5 V15.5 H22.5 Z" fill="#e4eaf6" stroke="#7b7f86" stroke-width="1"/>
<path d="M30 0.5 V5 H34.5" fill="#fff" stroke="#7b7f86"/>
<path d="M24.5 8.5 L27.5 11.8 L32.5 5.5" fill="none" stroke="#0c7a2c" stroke-width="1.9"/>
</svg>
<span class="t" style="left:854.5px;top:210.69px;font-size:11px;line-height:11px;font-weight:normal;color:#111;letter-spacing:-0.15px;">City</span>
<span class="t" style="left:996.5px;top:210.69px;font-size:11px;line-height:11px;font-weight:normal;color:#111;letter-spacing:-0.2px;">Brooklyn</span>
<div style="left:1198.5px;top:212.5px;width:9px;height:9px;border-radius:50%;background:radial-gradient(circle at 45% 40%,#dfe8ff 0,#8fb4f4 30%,#4f86e6 60%,#1f55c8 85%,#1a48b0 100%)"></div>
<svg style="left:815px;top:228px" width="36" height="17" viewBox="0 0 36 17">
<path d="M4.5 0.5 H12 L16.5 5 V15.5 H4.5 Z" fill="#e4eaf6" stroke="#7b7f86" stroke-width="1"/>
<path d="M12 0.5 V5 H16.5" fill="#fff" stroke="#7b7f86"/>
<circle cx="6.3" cy="7.3" r="4.6" fill="#1f5fc8"/>
<circle cx="5.5" cy="6.3" r="3" fill="#3d8fe8"/>
<path d="M3 5.5 Q5 3 8 4.5 Q7 7 5 7.5 Q4.5 9 3 8.5 Z M7 8.5 Q9 8 10 9.5 Q8.5 11.5 6.5 11 Z" fill="#34b244"/>
<path d="M22.5 0.5 H30 L34.5 5 V15.5 H22.5 Z" fill="#e4eaf6" stroke="#7b7f86" stroke-width="1"/>
<path d="M30 0.5 V5 H34.5" fill="#fff" stroke="#7b7f86"/>
<path d="M24.5 8.5 L27.5 11.8 L32.5 5.5" fill="none" stroke="#0c7a2c" stroke-width="1.9"/>
</svg>
<span class="t" style="left:854.5px;top:229.69px;font-size:11px;line-height:11px;font-weight:normal;color:#111;letter-spacing:-0.15px;">State</span>
<span class="t" style="left:996.5px;top:229.69px;font-size:11px;line-height:11px;font-weight:normal;color:#111;letter-spacing:-0.2px;">NY</span>
<div style="left:1198.5px;top:231.5px;width:9px;height:9px;border-radius:50%;background:radial-gradient(circle at 45% 40%,#dfe8ff 0,#8fb4f4 30%,#4f86e6 60%,#1f55c8 85%,#1a48b0 100%)"></div>
<svg style="left:815px;top:247px" width="36" height="17" viewBox="0 0 36 17">
<path d="M4.5 0.5 H12 L16.5 5 V15.5 H4.5 Z" fill="#e4eaf6" stroke="#7b7f86" stroke-width="1"/>
<path d="M12 0.5 V5 H16.5" fill="#fff" stroke="#7b7f86"/>
<circle cx="6.3" cy="7.3" r="4.6" fill="#1f5fc8"/>
<circle cx="5.5" cy="6.3" r="3" fill="#3d8fe8"/>
<path d="M3 5.5 Q5 3 8 4.5 Q7 7 5 7.5 Q4.5 9 3 8.5 Z M7 8.5 Q9 8 10 9.5 Q8.5 11.5 6.5 11 Z" fill="#34b244"/>
<path d="M22.5 0.5 H30 L34.5 5 V15.5 H22.5 Z" fill="#e4eaf6" stroke="#7b7f86" stroke-width="1"/>
<path d="M30 0.5 V5 H34.5" fill="#fff" stroke="#7b7f86"/>
<path d="M24.5 8.5 L27.5 11.8 L32.5 5.5" fill="none" stroke="#0c7a2c" stroke-width="1.9"/>
</svg>
<span class="t" style="left:854.5px;top:248.69px;font-size:11px;line-height:11px;font-weight:normal;color:#111;letter-spacing:-0.15px;">Zip Code</span>
<span class="t" style="left:997.5px;top:248.69px;font-size:11px;line-height:11px;font-weight:normal;color:#111;letter-spacing:-0.2px;">11234-4440</span>
<div style="left:1198.5px;top:250.5px;width:9px;height:9px;border-radius:50%;background:radial-gradient(circle at 45% 40%,#dfe8ff 0,#8fb4f4 30%,#4f86e6 60%,#1f55c8 85%,#1a48b0 100%)"></div>
<div style="left:991px;top:181px;width:184px;height:87px;border:4px solid #ff0000"></div>
<div style="left:815px;top:631px;width:418px;height:35px;background:#eeeff3;border-bottom:1px solid #b8bcc2"></div>
<div style="left:1119px;top:637px;width:44px;height:21px;background:linear-gradient(#d6e6f8,#bcd6f0);border:1px solid #8fb3dc;border-radius:3px"></div>
<span class="t" style="left:1128px;top:642.69px;font-size:11px;line-height:11px;font-weight:normal;color:#222;letter-spacing:-0.1px;">Save</span>
<div style="left:1165px;top:637px;width:52px;height:21px;background:linear-gradient(#d6e6f8,#bcd6f0);border:1px solid #8fb3dc;border-radius:3px"></div>
<span class="t" style="left:1174px;top:642.69px;font-size:11px;line-height:11px;font-weight:normal;color:#222;letter-spacing:-0.1px;">Cancel</span>
<div style="left:814px;top:666px;width:437px;height:24px;background:#fff;border:1px solid #d3dce6;border-top:none"></div>
<span class="t" style="left:819px;top:672.69px;font-size:11px;line-height:11px;font-weight:normal;color:#000;letter-spacing:-0.15px;">Address validated by Social Data and Insight Service</span>
</body></html>
